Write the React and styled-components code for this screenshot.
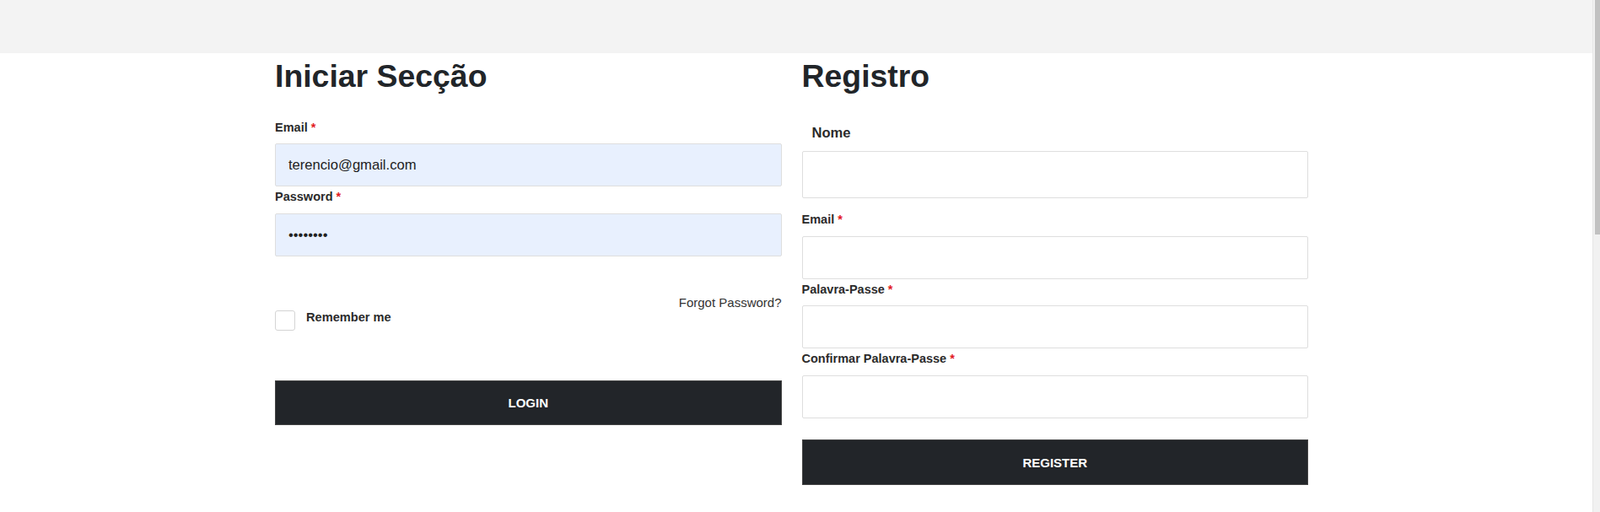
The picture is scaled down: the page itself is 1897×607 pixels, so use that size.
import React from "react";
import styled, { createGlobalStyle } from "styled-components";

const GlobalStyle = createGlobalStyle`
  body {
    margin: 0;
    font-family: "Liberation Sans", Arial, sans-serif;
    color: #212529;
    background: #fff;
  }
  * { box-sizing: border-box; }
`;

const Page = styled.div`
  min-height: 1325px;
  padding-right: 9px;
`;

const ScrollTrack = styled.div`
  position: fixed;
  top: 0;
  right: 0;
  width: 9px;
  height: 100vh;
  background: #f1f1f1;
  border-left: 1px solid #e6e6e6;
`;

const ScrollThumb = styled.div`
  margin-left: 2px;
  width: 6px;
  height: 278px;
  background: #c1c1c1;
`;

const TopBar = styled.div`
  height: 63px;
  background: #f3f3f3;
`;

const Container = styled.main`
  width: 1225px;
  margin-left: 326px;
  display: grid;
  grid-template-columns: 1fr 1fr;
  column-gap: 24px;
`;

const Column = styled.section`
  display: flex;
  flex-direction: column;
`;

const Title = styled.h2`
  margin: 5px 0 0;
  font-size: 37.4px;
  line-height: 1.2;
  font-weight: 700;
  color: #212529;
`;

const Form = styled.form`
  margin-top: ${(p) => p.$top}px;
  display: flex;
  flex-direction: column;
`;

const Group = styled.div`
  margin-bottom: ${(p) => p.$mb ?? 2}px;
`;

const Label = styled.label`
  display: block;
  font-size: ${(p) => (p.$big ? 16.6 : 14.5)}px;
  line-height: ${(p) => (p.$big ? 24.9 : 21.75)}px;
  font-weight: 700;
  color: #2b2b2b;
  padding-left: ${(p) => (p.$big ? 12 : 0)}px;
  margin-bottom: 8px;
`;

const Req = styled.span`
  color: #e2191f;
  margin-left: 4px;
`;

const Input = styled.input`
  display: block;
  width: 100%;
  height: ${(p) => p.$h ?? 51}px;
  border: 1px solid #dedede;
  border-radius: 2px;
  background: ${(p) => (p.$filled ? "#e8f0fe" : "#fff")};
  padding: 0 15px;
  font-family: "Liberation Sans", Arial, sans-serif;
  font-size: 16.6px;
  color: #222;
  outline: none;
`;

const Options = styled.div`
  margin-top: 44.4px;
  display: flex;
  flex-direction: column;
`;

const Forgot = styled.a`
  align-self: flex-end;
  font-size: 15px;
  line-height: 18px;
  color: #333;
  text-decoration: none;
  cursor: pointer;
`;

const CheckRow = styled.div`
  display: flex;
  align-items: flex-start;
  gap: 13px;
`;

const Check = styled.span`
  display: inline-block;
  flex: none;
  width: 24px;
  height: 24px;
  border: 1px solid #d4d4d4;
  border-radius: 3px;
  background: #fff;
`;

const CheckLabel = styled.span`
  font-size: 14.6px;
  line-height: 17.75px;
  font-weight: 700;
  color: #2b2b2b;
`;

const Button = styled.button`
  display: block;
  width: 100%;
  height: 53.5px;
  margin-top: ${(p) => p.$top}px;
  border: 1px solid #444;
  background: #222529;
  color: #fff;
  font-family: "Liberation Sans", Arial, sans-serif;
  font-size: 15px;
  font-weight: 700;
  text-transform: uppercase;
  cursor: pointer;
`;

export default function App() {
  return (
    <Page>
      <GlobalStyle />
      <TopBar />
      <Container>
        <Column>
          <Title>Iniciar Secção</Title>
          <Form $top={27.7} onSubmit={(e) => e.preventDefault()}>
            <Group>
              <Label>
                Email<Req>*</Req>
              </Label>
              <Input $filled type="text" defaultValue="terencio@gmail.com" />
            </Group>
            <Group>
              <Label>
                Password<Req>*</Req>
              </Label>
              <Input $filled type="password" defaultValue="terencio" />
            </Group>
            <Options>
              <Forgot>Forgot Password?</Forgot>
              <CheckRow>
                <Check />
                <CheckLabel>Remember me</CheckLabel>
              </CheckRow>
            </Options>
            <Button $top={58.5} type="submit">Login</Button>
          </Form>
        </Column>
        <Column>
          <Title>Registro</Title>
          <Form $top={33} onSubmit={(e) => e.preventDefault()}>
            <Group $mb={15}>
              <Label $big>Nome</Label>
              <Input $h={56} type="text" />
            </Group>
            <Group>
              <Label>
                Email<Req>*</Req>
              </Label>
              <Input type="text" />
            </Group>
            <Group>
              <Label>
                Palavra-Passe<Req>*</Req>
              </Label>
              <Input type="password" />
            </Group>
            <Group>
              <Label>
                Confirmar Palavra-Passe<Req>*</Req>
              </Label>
              <Input type="password" />
            </Group>
            <Button $top={23.4} type="submit">Register</Button>
          </Form>
        </Column>
      </Container>
      <ScrollTrack>
        <ScrollThumb />
      </ScrollTrack>
    </Page>
  );
}
